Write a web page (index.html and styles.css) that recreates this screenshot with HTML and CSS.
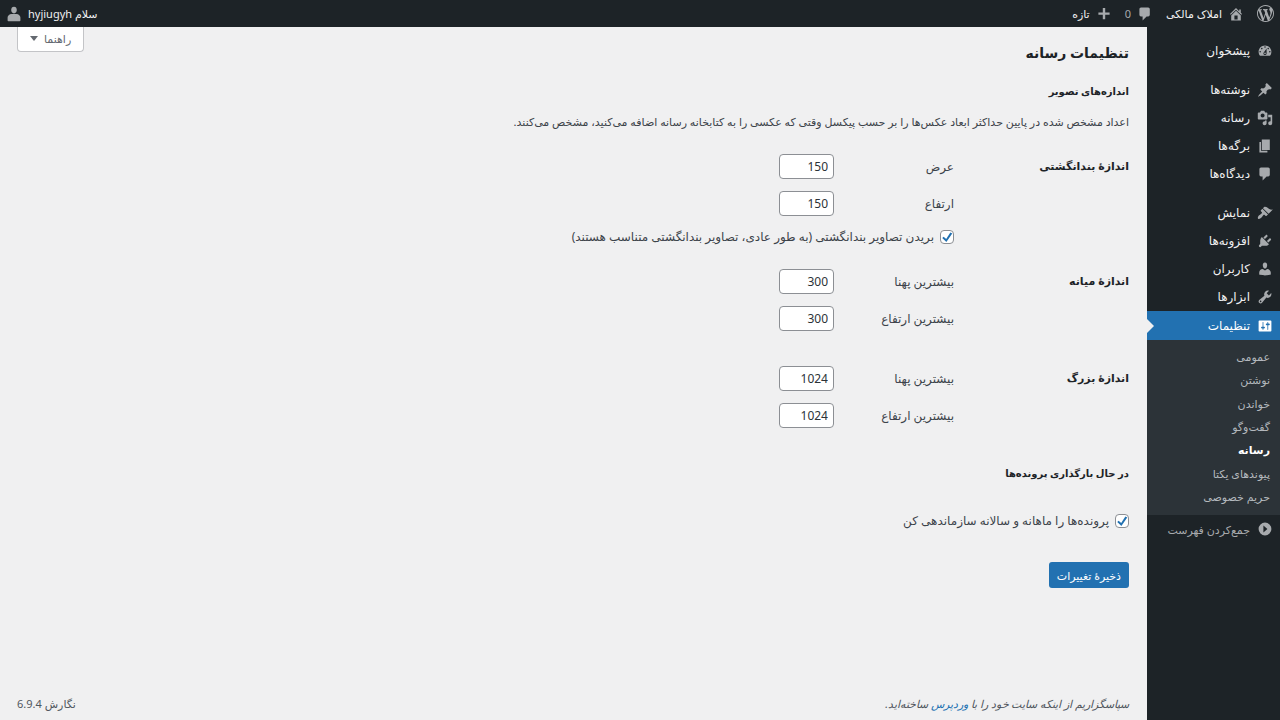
FILE: index.html
```
<!DOCTYPE html>
<html lang="fa" dir="rtl">
<head>
  <meta charset="UTF-8">
  <meta name="viewport" content="width=device-width, initial-scale=1.0">
  <title>تنظیمات رسانه</title>
  <link rel="stylesheet" href="styles.css">
</head>
<body>
  <!-- Admin bar -->
  <header class="adminbar">
    <nav class="bar-group">
      <a href="#" class="bar-item" aria-label="وردپرس">
        <svg class="icon icon-logo" viewBox="0 0 20 20"><path d="M20 10c0-5.51-4.49-10-10-10C4.48 0 0 4.49 0 10c0 5.52 4.48 10 10 10 5.51 0 10-4.48 10-10zM7.78 15.37L4.37 6.22c.55-.02 1.17-.08 1.17-.08.5-.06.44-1.13-.06-1.11 0 0-1.45.11-2.37.11-.18 0-.37 0-.58-.01C4.12 2.69 6.87 1.11 10 1.11c2.33 0 4.45.87 6.05 2.34-.68-.11-1.65.39-1.65 1.58 0 .74.45 1.36.9 2.1.35.61.55 1.36.55 2.46 0 1.49-1.4 5-1.4 5l-3.03-8.37c.54-.02.82-.17.82-.17.5-.05.44-1.25-.06-1.22 0 0-1.44.12-2.38.12-.87 0-2.33-.12-2.33-.12-.5-.03-.56 1.2-.06 1.22l.92.08 1.26 3.41zM17.41 10c.24-.64.74-1.87.43-4.25.7 1.29 1.05 2.71 1.05 4.25 0 3.29-1.73 6.24-4.4 7.78.97-2.59 1.94-5.2 2.92-7.78zM6.1 18.09C3.12 16.65 1.11 13.53 1.11 10c0-1.3.23-2.48.72-3.59C3.25 10.3 4.67 14.2 6.1 18.09zm4.03-6.63l2.58 6.98c-.86.29-1.76.45-2.71.45-.79 0-1.57-.11-2.29-.33.81-2.38 1.62-4.74 2.42-7.1z"/></svg>
      </a>
      <a href="#" class="bar-item">
        <svg class="icon" viewBox="0 0 20 20"><path d="M16 8.5l1.53 1.53-1.06 1.06L10 4.6l-6.47 6.49-1.06-1.06L10 2.5l4 4v-2h2v4zm-6-2.46l6 5.99V18H4v-5.97zM12 17v-5H8v5h4z"/></svg>
        املاک مالکی
      </a>
      <a href="#" class="bar-item bar-comments">
        <svg class="icon" viewBox="0 0 20 20"><path d="M5 2h9c1.1 0 2 .9 2 2v7c0 1.1-.9 2-2 2h-2l-5 5v-5H5c-1.1 0-2-.9-2-2V4c0-1.1.9-2 2-2z"/></svg>
        0
      </a>
      <a href="#" class="bar-item">
        <svg class="icon" viewBox="0 0 20 20"><path d="M17 8v3h-5.500v5.500h-3V11H3V8h5.500V2.500h3V8z"/></svg>
        تازه
      </a>
    </nav>
    <a href="#" class="bar-item bar-account">
      <span>سلام hyjiugyh</span>
      <svg class="icon icon-avatar" viewBox="0 0 20 20"><path d="M10 9.250c-2.270 0-3.500-2.400-3.500-4.200C6.500 2.500 7.820 1 10 1s3.500 1.500 3.500 4.050c0 1.800-1.230 4.200-3.500 4.200zM7 10h6c3 0 5 2.330 5 4.530V18c0 .6-.4 1-1 1H3c-.6 0-1-.4-1-1v-3.470C2 12.280 4 10 7 10z"/></svg>
    </a>
  </header>

  <div class="layout">
    <!-- Side menu -->
    <nav class="sidebar">
      <ul class="menu">
        <li><a href="#" class="menu-item"><svg class="icon" viewBox="0 0 20 20"><path d="M3.760 16h12.480c1.100-1.370 1.760-3.110 1.760-5 0-4.420-3.580-8-8-8s-8 3.580-8 8c0 1.890.660 3.630 1.760 5zM10 4c.55 0 1 .45 1 1s-.45 1-1 1-1-.45-1-1 .45-1 1-1zM6 6c.55 0 1 .45 1 1s-.45 1-1 1-1-.45-1-1 .45-1 1-1zm8 0c.55 0 1 .45 1 1s-.45 1-1 1-1-.45-1-1 .45-1 1-1zm-5.370 5.550L12 7v6c0 1.100-.9 2-2 2s-2-.9-2-2c0-.57.24-1.080.63-1.450zM4 10c.55 0 1 .45 1 1s-.45 1-1 1-1-.45-1-1 .45-1 1-1zm12 0c.55 0 1 .45 1 1s-.45 1-1 1-1-.45-1-1 .45-1 1-1zm-5 3c0-.55-.45-1-1-1s-1 .45-1 1 .45 1 1 1 1-.45 1-1z"/></svg>پیشخوان</a></li>
      </ul>
      <ul class="menu">
        <li><a href="#" class="menu-item"><svg class="icon" viewBox="0 0 20 20"><path d="M10.440 3.020l1.820-1.820 6.360 6.350-1.830 1.820c-1.050-.68-2.480-.57-3.410.36l-.75.75c-.92.93-1.040 2.350-.35 3.410l-1.830 1.820-2.410-2.410-2.800 2.790c-.42.42-3.380 2.710-3.800 2.290s1.860-3.390 2.280-3.810l2.790-2.790L4.100 9.360l1.830-1.820c1.050.69 2.480.57 3.400-.36l.75-.75c.93-.92 1.050-2.350.36-3.410z"/></svg>نوشته‌ها</a></li>
        <li><a href="#" class="menu-item"><svg class="icon" viewBox="0 0 20 20"><path d="M13 11V4c0-.55-.45-1-1-1h-1.670L9 1H5L3.670 3H2c-.55 0-1 .45-1 1v7c0 .55.45 1 1 1h10c.55 0 1-.45 1-1zM7 4.500c1.380 0 2.500 1.120 2.500 2.500S8.380 9.500 7 9.500 4.500 8.380 4.500 7 5.620 4.500 7 4.500zM14 6h5v10.500c0 1.380-1.120 2.500-2.500 2.500S14 17.880 14 16.500s1.120-2.500 2.500-2.500c.17 0 .34.02.5.05V9h-3V6zm-4 8.050V13h2v3.500c0 1.380-1.120 2.500-2.500 2.500S7 17.880 7 16.500 8.120 14 9.500 14c.17 0 .34.02.5.05z"/></svg>رسانه</a></li>
        <li><a href="#" class="menu-item"><svg class="icon" viewBox="0 0 20 20"><path d="M6 15V2h10v13H6zm-1 1h8v2H3V5h2v11z"/></svg>برگه‌ها</a></li>
        <li><a href="#" class="menu-item"><svg class="icon" viewBox="0 0 20 20"><path d="M5 2h9c1.100 0 2 .9 2 2v7c0 1.100-.9 2-2 2h-2l-5 5v-5H5c-1.100 0-2-.9-2-2V4c0-1.100.9-2 2-2z"/></svg>دیدگاه‌ها</a></li>
      </ul>
      <ul class="menu">
        <li><a href="#" class="menu-item"><svg class="icon" viewBox="0 0 20 20"><path d="M14.480 11.060L7.410 3.990l1.500-1.500c.5-.56 2.300-.47 3.510.32 1.210.8 1.430 1.280 2.910 2.100 1.180.64 2.450 1.260 4.450.85zm-.71.71L6.700 4.700 4.930 6.470c-.39.39-.39 1.020 0 1.410l1.060 1.060c.39.39.39 1.030 0 1.420-.6.6-1.430 1.110-2.210 1.690-.35.26-.7.53-1.010.84C1.430 14.230.4 16.080 1.400 17.070c.99 1 2.840-.03 4.180-1.360.31-.31.58-.66.85-1.020.57-.78 1.080-1.610 1.690-2.210.39-.39 1.020-.39 1.410 0l1.060 1.060c.39.39 1.020.39 1.410 0z"/></svg>نمایش</a></li>
        <li><a href="#" class="menu-item"><svg class="icon" viewBox="0 0 20 20"><path d="M13.110 4.360L9.870 7.600 8 5.730l3.240-3.240c.35-.34 1.050-.2 1.560.32.52.51.66 1.210.31 1.550zm-8 1.770l.91-1.120 9.010 9.010-1.190.84c-.71.71-2.630 1.160-3.820 1.160H6.140L4.900 17.260c-.59.59-1.540.59-2.120 0-.59-.58-.59-1.530 0-2.120l1.240-1.240v-3.880c0-1.130.4-3.190 1.090-3.890zm7.260 3.970l3.240-3.240c.34-.35 1.040-.21 1.550.31.52.51.66 1.210.31 1.550l-3.240 3.250z"/></svg>افزونه‌ها</a></li>
        <li><a href="#" class="menu-item"><svg class="icon" viewBox="0 0 20 20"><path d="M10 9.250c-2.270 0-2.730-3.440-2.730-3.440C7 4.020 7.820 2 9.970 2c2.160 0 2.980 2.020 2.710 3.810 0 0-.41 3.440-2.680 3.440zm0 2.570L12.720 10c2.390 0 4.520 2.330 4.520 4.530v2.490s-3.650 1.130-7.240 1.130c-3.650 0-7.240-1.130-7.240-1.130v-2.490c0-2.250 1.940-4.480 4.470-4.480z"/></svg>کاربران</a></li>
        <li><a href="#" class="menu-item"><svg class="icon" viewBox="0 0 20 20"><path d="M16.680 9.770c-1.340 1.340-3.300 1.670-4.950.99l-5.410 6.520c-.99.99-2.590.99-3.580 0s-.99-2.590 0-3.570l6.520-5.420c-.68-1.650-.35-3.610.99-4.950 1.280-1.280 3.120-1.620 4.720-1.060l-2.890 2.890 2.820 2.820 2.860-2.870c.53 1.580.18 3.390-1.080 4.650zM3.810 16.210c.4.39 1.040.39 1.430 0 .4-.4.4-1.040 0-1.430-.39-.4-1.030-.4-1.430 0-.39.39-.39 1.030 0 1.430z"/></svg>ابزارها</a></li>
        <li>
          <a href="#" class="menu-item active"><svg class="icon" viewBox="0 0 20 20"><path d="M18 16V4c0-.55-.45-1-1-1H3c-.55 0-1 .45-1 1v12c0 .55.45 1 1 1h14c.55 0 1-.45 1-1zM8 11h1c.55 0 1 .45 1 1s-.45 1-1 1H8v1.500c0 .28-.22.5-.5.5s-.5-.22-.5-.5V13H6c-.55 0-1-.45-1-1s.45-1 1-1h1V5.500c0-.28.22-.5.5-.5s.5.22.5.5V11zm5-2h-1c-.55 0-1-.45-1-1s.45-1 1-1h1V5.500c0-.28.22-.5.5-.5s.5.22.5.5V7h1c.55 0 1 .45 1 1s-.45 1-1 1h-1v5.500c0 .28-.22.5-.5.5s-.5-.22-.5-.5V9z"/></svg>تنظیمات</a>
          <ul class="submenu">
            <li><a href="#">عمومی</a></li>
            <li><a href="#">نوشتن</a></li>
            <li><a href="#">خواندن</a></li>
            <li><a href="#">گفت‌وگو</a></li>
            <li><a href="#" class="current">رسانه</a></li>
            <li><a href="#">پیوندهای یکتا</a></li>
            <li><a href="#">حریم خصوصی</a></li>
          </ul>
        </li>
      </ul>
      <button type="button" class="menu-item collapse"><svg class="icon" viewBox="0 0 20 20"><path fill-rule="evenodd" d="M10 2a8 8 0 1 1 0 16 8 8 0 0 1 0-16zM8 5.500v9l5-4.500z"/></svg>جمع‌کردن فهرست</button>
    </nav>

    <main class="content">
      <button type="button" class="help">راهنما <span class="caret"></span></button>

      <form>
        <h1>تنظیمات رسانه</h1>
        <h2>اندازه‌های تصویر</h2>
        <p class="description">اعداد مشخص شده در پایین حداکثر ابعاد عکس‌ها را بر حسب پیکسل وقتی که عکسی را به کتابخانه رسانه اضافه می‌کنید، مشخص می‌کنند.</p>

        <table class="form-table">
          <tr>
            <th scope="row">اندازهٔ بندانگشتی</th>
            <td>
              <div class="field"><label for="thumb-w">عرض</label><input id="thumb-w" class="size" type="text" inputmode="numeric" value="150"></div>
              <div class="field"><label for="thumb-h">ارتفاع</label><input id="thumb-h" class="size" type="text" inputmode="numeric" value="150"></div>
              <div class="check"><input id="crop" type="checkbox" checked><label for="crop">بریدن تصاویر بندانگشتی (به طور عادی، تصاویر بندانگشتی متناسب هستند)</label></div>
            </td>
          </tr>
          <tr>
            <th scope="row">اندازهٔ میانه</th>
            <td>
              <div class="field"><label for="medium-w">بیشترین پهنا</label><input id="medium-w" class="size" type="text" inputmode="numeric" value="300"></div>
              <div class="field"><label for="medium-h">بیشترین ارتفاع</label><input id="medium-h" class="size" type="text" inputmode="numeric" value="300"></div>
            </td>
          </tr>
          <tr>
            <th scope="row">اندازهٔ بزرگ</th>
            <td>
              <div class="field"><label for="large-w">بیشترین پهنا</label><input id="large-w" class="size" type="text" inputmode="numeric" value="1024"></div>
              <div class="field"><label for="large-h">بیشترین ارتفاع</label><input id="large-h" class="size" type="text" inputmode="numeric" value="1024"></div>
            </td>
          </tr>
        </table>

        <h2>در حال بارگذاری پرونده‌ها</h2>
        <div class="check uploads"><input id="folders" type="checkbox" checked><label for="folders">پرونده‌ها را ماهانه و سالانه سازماندهی کن</label></div>

        <button type="submit" class="primary">ذخیرهٔ تغییرات</button>
      </form>

      <footer class="footer">
        <span class="thanks">سپاسگزاریم از اینکه سایت خود را با <a href="#">وردپرس</a> ساخته‌اید.</span>
        <span>نگارش 6.9.4</span>
      </footer>
    </main>
  </div>
</body>
</html>
```

FILE: styles.css
```
* {
  box-sizing: border-box;
}

body {
  margin: 0;
  min-height: 100vh;
  display: flex;
  flex-direction: column;
  background: #f0f0f1;
  color: #3c434a;
  font-family: "Noto Sans", "DejaVu Sans", sans-serif;
  font-size: 11px;
  line-height: 18px;
}

ul {
  list-style: none;
  margin: 0;
  padding: 0;
}

a {
  color: #2271b1;
  text-decoration: none;
}

button, input {
  font-family: inherit;
}

.icon {
  width: 16px;
  height: 16px;
  fill: #a7aaad;
  flex: none;
}

/* Admin bar */
.adminbar {
  display: flex;
  justify-content: space-between;
  height: 27px;
  padding: 0 6px;
  background: #1d2327;
}

.bar-group {
  display: flex;
  gap: 13px;
}

.bar-item {
  display: flex;
  align-items: center;
  gap: 6px;
  color: #f0f0f1;
}

.bar-comments {
  color: #a7aaad;
}

.icon-logo {
  width: 17px;
  height: 17px;
}

.layout {
  flex: 1;
  display: flex;
}

/* Side menu */
.sidebar {
  width: 133px;
  flex: none;
  padding-top: 10px;
  background: #1d2327;
}

.menu + .menu {
  margin-top: 11px;
}

.menu-item {
  display: flex;
  align-items: center;
  gap: 7px;
  height: 28px;
  padding: 0 7px;
  color: #f0f0f1;
  font-size: 12px;
}

.menu-item.active {
  position: relative;
  height: 29px;
  background: #2271b1;
  color: #fff;
}

.menu-item.active .icon {
  fill: #fff;
}

.menu-item.active::after {
  content: "";
  position: absolute;
  left: 0;
  top: 8px;
  border: 7px solid transparent;
  border-left-color: #f0f0f1;
  border-right-width: 0;
}

.submenu {
  display: flex;
  flex-direction: column;
  justify-content: space-between;
  min-height: 175px;
  padding: 5px 10px 7px;
  background: #2c3338;
}

.submenu a {
  display: block;
  line-height: 23px;
  color: #b4b9be;
}

.submenu .current {
  color: #fff;
  font-weight: bold;
}

.collapse {
  width: 100%;
  border: 0;
  background: none;
  font-size: 11px;
  color: #a7aaad;
}

/* Content */
.content {
  flex: 1;
  display: flex;
  flex-direction: column;
  position: relative;
  padding: 0 18px 7px 17px;
}

.help {
  position: absolute;
  top: 0;
  left: 17px;
  display: flex;
  align-items: center;
  gap: 6px;
  height: 25px;
  padding: 0 12px 1px;
  border: 1px solid #c3c4c7;
  border-top: 0;
  border-radius: 0 0 4px 4px;
  background: #fff;
  color: #646970;
  font-size: 11px;
}

.caret {
  border: 4px solid transparent;
  border-top: 5px solid #646970;
  border-bottom: 0;
}

h1, h2 {
  margin: 0;
  color: #1d2327;
}

h1 {
  padding: 12px 0 2px;
  font-size: 14px;
  line-height: 28px;
}

h2 {
  margin-top: 12px;
  font-size: 10px;
  line-height: 20px;
}

.description {
  margin: 12px 0 11px;
}

.form-table {
  width: 100%;
  border-collapse: collapse;
}

.form-table th {
  width: 175px;
  padding: 15px 0;
  text-align: right;
  vertical-align: top;
  color: #1d2327;
}

.form-table td {
  padding: 12px 0 11px;
  font-size: 12px;
}

.field {
  display: flex;
  align-items: center;
  margin-bottom: 12px;
}

.field label {
  width: 120px;
}

.size {
  width: 55px;
  height: 25px;
  padding: 0 5px;
  border: 1px solid #8c8f94;
  border-radius: 4px;
  background: #fff;
  color: #2c3338;
  font-size: 12px;
}

.check {
  display: flex;
  align-items: center;
  gap: 6px;
  font-size: 12px;
}

.check input {
  appearance: none;
  width: 14px;
  height: 14px;
  margin: 0;
  border: 1px solid #8c8f94;
  border-radius: 4px;
  background: #fff;
}

.check input:checked {
  background: #fff url("data:image/svg+xml,%3Csvg xmlns='http://www.w3.org/2000/svg' viewBox='0 0 20 20'%3E%3Cpath d='M14.800 3.500 8.800 12.800 5.200 9.500 3.200 11.300 9.100 17 17.500 5.100z' fill='%232271b1'/%3E%3C/svg%3E") center / 14px no-repeat;
}

.uploads {
  margin-top: 29px;
}

.primary {
  height: 26px;
  margin-top: 32px;
  padding: 0 8px;
  border: 0;
  border-radius: 3px;
  background: #2271b1;
  color: #fff;
  font-size: 11px;
}

.footer {
  display: flex;
  justify-content: space-between;
  margin-top: auto;
  color: #50575e;
}

.thanks {
  font-style: italic;
}
```
